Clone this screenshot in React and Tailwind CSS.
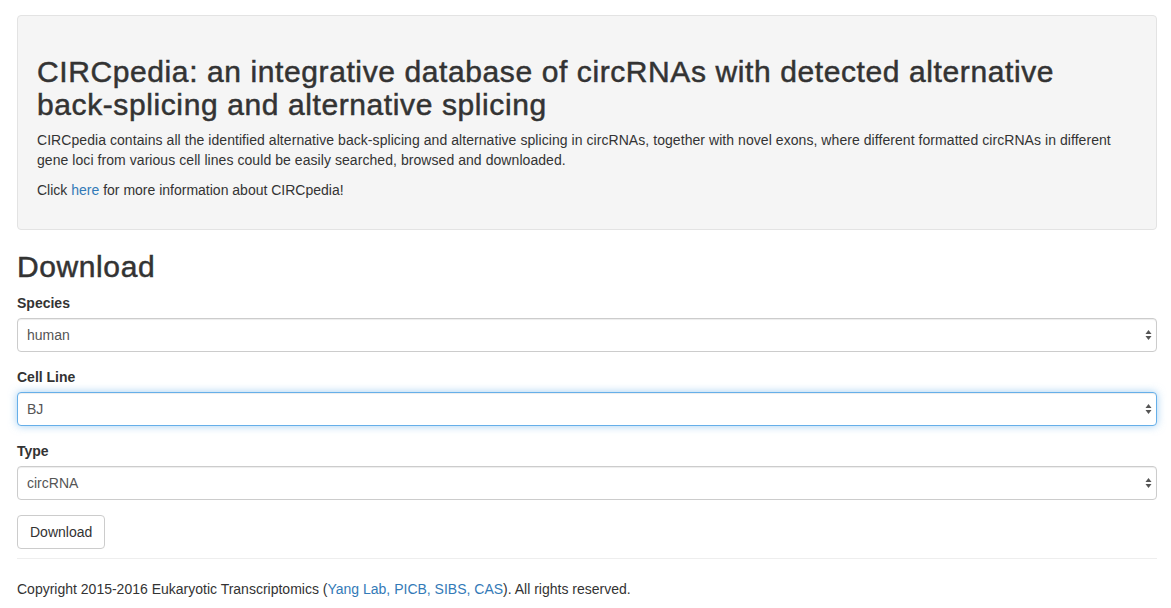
import React from 'react';

const Arrows = () => (
    <svg className="absolute right-[5px] top-1/2 -translate-y-1/2 pointer-events-none" width="7" height="12" viewBox="0 0 7 12">
        <path d="M3.5 1 L6.5 5 L0.5 5 Z" fill="#555" />
        <path d="M3.5 11 L6.5 7 L0.5 7 Z" fill="#555" />
    </svg>
);

const SelectField = ({ label, value, focused }) => (
    <div className="mb-[15px]">
        <label className="block font-bold text-[14px] leading-[20px] mb-[5px]">{label}</label>
        <div className="relative">
            <div
                className={`h-[34px] w-full rounded-[4px] border bg-white px-[9px] flex items-center text-[14px] text-[#555] ${
                    focused
                        ? 'border-[#66afe9] shadow-[inset_0_1px_1px_rgba(0,0,0,0.075),0_0_8px_rgba(102,175,233,0.6)]'
                        : 'border-[#ccc] shadow-[inset_0_1px_1px_rgba(0,0,0,0.075)]'
                }`}
            >
                {value}
            </div>
            <Arrows />
        </div>
    </div>
);

export default function App() {
    return (
        <div className="min-h-screen bg-white text-[#333] font-['Liberation_Sans',Arial,sans-serif] text-[14px] leading-[20px]">
            <div className="w-[1140px] ml-[17px] pt-[15px]">
                <div className="bg-[#f5f5f5] border border-[#e3e3e3] rounded-[4px] px-[19px] pt-[39px] pb-[19px]">
                    <h1 className="text-[30px] leading-[33px] font-normal tracking-[0.6px] [-webkit-text-stroke:0.5px_#333] mb-[9px]">
                        CIRCpedia: an integrative database of circRNAs with detected alternative back-splicing and alternative splicing
                    </h1>
                    <p className="mb-[10px] tracking-[0.06px]">
                        CIRCpedia contains all the identified alternative back-splicing and alternative splicing in circRNAs, together with novel exons, where different formatted circRNAs in different gene loci from various cell lines could be easily searched, browsed and downloaded.
                    </p>
                    <p className="mb-[10px]">
                        Click <a href="#" className="text-[#337ab7]">here</a> for more information about CIRCpedia!
                    </p>
                </div>

                <h2 className="text-[30px] leading-[33px] font-normal tracking-[0.6px] [-webkit-text-stroke:0.5px_#333] mt-[20px] mb-[10px]">Download</h2>

                <form>
                    <SelectField label="Species" value="human" />
                    <SelectField label="Cell Line" value="BJ" focused />
                    <SelectField label="Type" value="circRNA" />
                    <button
                        type="button"
                        className="h-[34px] px-[12px] border border-[#ccc] rounded-[4px] bg-white text-[14px] text-[#333]"
                    >
                        Download
                    </button>
                </form>

                <hr className="mt-[9px] mb-[20px] border-t border-[#eee]" />

                <p>
                    Copyright 2015-2016 Eukaryotic Transcriptomics (<a href="#" className="text-[#337ab7]">Yang Lab, PICB, SIBS, CAS</a>). All rights reserved.
                </p>
            </div>
        </div>
    );
}
